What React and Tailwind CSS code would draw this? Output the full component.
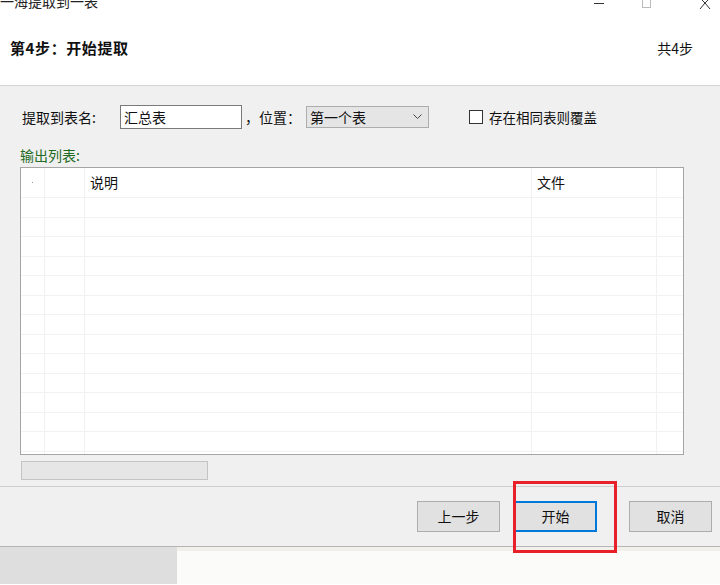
import React from 'react';

const font = { fontFamily: '"Noto Sans CJK SC", "Noto Sans", sans-serif' };

const rows = Array.from({ length: 14 });

function Btn({ children, focused }) {
  return (
    <button
      className={
        'w-[83px] h-[31px] bg-[#e1e1e1] text-[14px] text-[#111] ' +
        (focused ? 'border-2 border-[#0078d7]' : 'border border-[#adadad]')
      }
    >
      {children}
    </button>
  );
}

export default function App() {
  return (
    <div className="w-[720px] h-[585px] overflow-hidden bg-white relative text-[#111]" style={font}>
      {/* title bar, cut off at the top */}
      <div className="h-[12px] flex items-start justify-between overflow-hidden">
        <div className="text-[14px] leading-none -mt-[6px] text-[#222]">一海提取到一表</div>
        <div className="flex items-start">
          <div className="w-[10px] h-px bg-[#333] mt-[3px] mr-[38px]" />
          <div className="w-[9px] h-[8px] border border-[#bbb] border-t-0 mr-[48px]" />
          <svg width="12" height="9" viewBox="0 0 12 9" className="mr-[9px]">
            <path d="M1 9 L6 3 L11 9 M6 3 L3 0 M6 3 L9 0" stroke="#333" strokeWidth="1" fill="none" />
          </svg>
        </div>
      </div>

      {/* step header */}
      <div className="h-[74px] flex items-center justify-between pl-[10px] pr-[27px] border-b border-[#d4d4d4]">
        <div className="text-[15px] font-bold tracking-[0.6px]">第4步：开始提取</div>
        <div className="text-[14px]">共4步</div>
      </div>

      {/* body */}
      <div className="h-[401px] bg-[#f0f0f0] pl-[20px] pt-[19px] border-b border-[#cdcdcd]">
        <div className="flex items-center h-[24px]">
          <span className="text-[14px] ml-[2px] w-[98px]">提取到表名:</span>
          <div className="w-[122px] h-[24px] bg-white border border-[#7a7a7a] flex items-center px-[3px] text-[14px]">汇总表</div>
          <span className="text-[14px] ml-[3px] w-[61px]">，位置：</span>
          <div className="w-[123px] h-[22px] bg-[#e5e5e5] border border-[#adadad] flex items-center justify-between pl-[3px] pr-[6px] text-[14px]">
            <span>第一个表</span>
            <svg width="9" height="6" viewBox="0 0 9 6">
              <path d="M0.5 0.5 L4.5 4.5 L8.5 0.5" stroke="#444" strokeWidth="1" fill="none" />
            </svg>
          </div>
          <div className="w-[14px] h-[14px] border border-[#333] bg-white ml-[40px]" />
          <span className="text-[13.5px] ml-[6px]">存在相同表则覆盖</span>
        </div>

        <div className="text-[14px] text-[#1f6b1f] mt-[16px] leading-[20px]">输出列表:</div>

        <div className="w-[664px] h-[288px] mt-[2px] bg-white border border-[#a5a5a5] overflow-hidden">
          <div className="flex h-[29px] text-[14px]">
            <div className="w-[24px] flex items-center justify-center border-r border-[#f1f1f4]">
              <div className="w-px h-px bg-[#999]" />
            </div>
            <div className="w-[40px] border-r border-[#f1f1f4]" />
            <div className="w-[447px] flex items-center pl-[5px] border-r border-[#f1f1f4]">说明</div>
            <div className="w-[125px] flex items-center pl-[5px] border-r border-[#f1f1f4]">文件</div>
            <div className="flex-1" />
          </div>
          {rows.map((_, i) => (
            <div key={i} className="flex h-[19.5px] border-t border-[#f1f2f5]">
              <div className="w-[24px] border-r border-[#f1f1f4]" />
              <div className="w-[40px] border-r border-[#f1f1f4]" />
              <div className="w-[447px] border-r border-[#f1f1f4]" />
              <div className="w-[125px] border-r border-[#f1f1f4]" />
              <div className="flex-1" />
            </div>
          ))}
        </div>

        <div className="w-[187px] h-[19px] mt-[6px] ml-[1px] bg-[#e6e6e6] border border-[#c4c4c4]" />
      </div>

      {/* buttons */}
      <div className="h-[60px] bg-[#f0f0f0] flex items-center justify-end pr-[8px] gap-[14px] border-b border-[#b5b5b5]">
        <Btn>上一步</Btn>
        <div className="mr-[18px]">
          <Btn focused>开始</Btn>
        </div>
        <Btn>取消</Btn>
      </div>

      {/* beneath the dialog */}
      <div className="flex h-[37px]">
        <div className="w-[177px] bg-[#dedede]" />
        <div className="flex-1 bg-[#fbfbfa] border-t-4 border-[#f2f0ea]" />
      </div>

      {/* red annotation box */}
      <div className="absolute left-[513px] top-[481px] w-[104px] h-[72px] border-[3px] border-[#e8202a]" />
    </div>
  );
}
